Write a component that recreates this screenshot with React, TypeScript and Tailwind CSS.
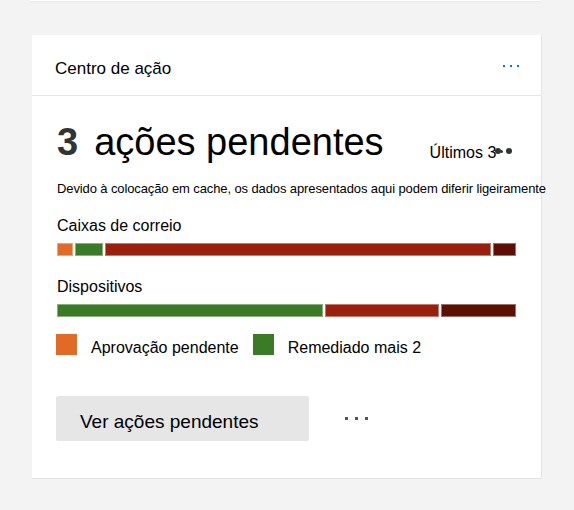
import React from 'react';

type Segment = { color: string; width: number };

const mailboxBar: Segment[] = [
  { color: 'bg-[#e06a26]', width: 16 },
  { color: 'bg-[#3b7a27]', width: 28 },
  { color: 'bg-[#98200d]', width: 388 },
  { color: 'bg-[#5e0f04]', width: 23 },
];

const deviceBar: Segment[] = [
  { color: 'bg-[#3b7a27]', width: 267 },
  { color: 'bg-[#98200d]', width: 114 },
  { color: 'bg-[#5e0f04]', width: 75 },
];

const StackedBar: React.FC<{ segments: Segment[] }> = ({ segments }) => (
  <div className="flex gap-[2px] h-[13px]">
    {segments.map((s, i) => (
      <div
        key={i}
        className={`${s.color} h-full border border-white/40`}
        style={{ width: s.width }}
      />
    ))}
  </div>
);

const App: React.FC = () => {
  return (
    <div
      className="w-[574px] h-[510px] bg-[#f3f3f3] overflow-hidden text-black"
      style={{ fontFamily: '"Liberation Sans", Arial, sans-serif' }}
    >
      {/* bottom edge of previous card */}
      <div className="ml-[30px] w-[511px] h-[2px] bg-white border-b border-[#e8e8e8]" />

      <div className="ml-[32px] mt-[33px] w-[510px] h-[444px] bg-white border-r border-b border-[#e4e4e4]">
        <div className="h-[61px] flex items-center justify-between pl-[23px] pr-[22px] border-b border-[#e6e6e6]">
          <span className="text-[17px] relative top-[4px]">Centro de ação</span>
          <div className="flex gap-[5px] items-center relative top-[1px]">
            <span className="w-[2px] h-[2px] bg-[#0078d4]" />
            <span className="w-[2px] h-[2px] bg-[#0078d4]" />
            <span className="w-[2px] h-[2px] bg-[#0078d4]" />
          </div>
        </div>

        <div className="px-[25px] pt-[27px]">
          <div className="flex items-baseline h-[38px] leading-[38px]">
            <span className="text-[38px] font-bold text-[#333]">3</span>
            <span className="text-[38px] ml-[16px]">ações pendentes</span>
            <span className="text-[16px] ml-[46px] relative top-[3px]">Últimos 3</span>
            <span className="relative flex items-center -top-[1px] -ml-[1px]">
              <span className="w-[6px] h-[6px] rounded-full bg-[#333]" />
              <span className="w-[3px] h-[3px] rounded-full bg-[#333] -ml-[1px]" />
              <span className="w-[6px] h-[6px] rounded-full bg-[#333] ml-[3px]" />
            </span>
          </div>

          <div className="mt-[20px] text-[13px] leading-[16px] whitespace-nowrap tracking-[-0.11px]">
            Devido à colocação em cache, os dados apresentados aqui podem diferir ligeiramente
          </div>

          <div className="mt-[19px] text-[16px] leading-[20px]">Caixas de correio</div>
          <div className="mt-[7px]">
            <StackedBar segments={mailboxBar} />
          </div>

          <div className="mt-[21px] text-[16px] leading-[20px]">Dispositivos</div>
          <div className="mt-[7px]">
            <StackedBar segments={deviceBar} />
          </div>

          <div className="mt-[17px] flex items-start gap-[14px] text-[16px] leading-[21px] h-[21px]">
            <span className="w-[21px] h-[21px] bg-[#e06a26] -ml-[1px]" />
            <span className="relative top-[3px]">Aprovação pendente</span>
            <span className="w-[21px] h-[21px] bg-[#3b7a27]" />
            <span className="relative top-[3px]">Remediado mais 2</span>
          </div>

          <div className="mt-[41px] flex items-center">
            <button className="w-[253px] h-[45px] -ml-[1px] bg-[#e6e6e6] rounded-[2px] text-left pl-[24px] text-[19px] pt-[8px]">
              Ver ações pendentes
            </button>
            <div className="ml-[36px] flex gap-[7px] items-center">
              <span className="w-[3px] h-[3px] bg-[#555]" />
              <span className="w-[3px] h-[3px] bg-[#555]" />
              <span className="w-[3px] h-[3px] bg-[#555]" />
            </div>
          </div>
        </div>
      </div>
    </div>
  );
};

export default App;
